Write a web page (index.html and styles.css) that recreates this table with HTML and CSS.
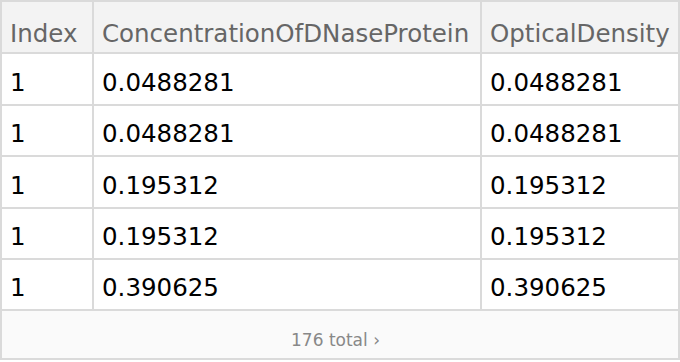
FILE: index.html
```html
<!DOCTYPE html>
<html>
<head>
<meta charset="utf-8">
<link rel="stylesheet" href="styles.css">
</head>
<body>
<div class="grid">
  <div class="cell head">Index</div>
  <div class="cell head">ConcentrationOfDNaseProtein</div>
  <div class="cell head">OpticalDensity</div>

  <div class="cell">1</div>
  <div class="cell">0.0488281</div>
  <div class="cell">0.0488281</div>

  <div class="cell">1</div>
  <div class="cell">0.0488281</div>
  <div class="cell">0.0488281</div>

  <div class="cell">1</div>
  <div class="cell">0.195312</div>
  <div class="cell">0.195312</div>

  <div class="cell">1</div>
  <div class="cell">0.195312</div>
  <div class="cell">0.195312</div>

  <div class="cell">1</div>
  <div class="cell">0.390625</div>
  <div class="cell">0.390625</div>

  <div class="footer">176 total ›</div>
</div>
</body>
</html>
```

FILE: styles.css
```css
html, body {
  margin: 0;
  padding: 0;
  background: #ffffff;
}

.grid {
  width: 680px;
  box-sizing: border-box;
  display: grid;
  grid-template-columns: 92px 388px 198px;
  grid-template-rows: 52px 52px 51px 52px 51px 51px 49px;
  border-top: 2px solid #dadada;
  border-left: 2px solid #dadada;
  font-family: "DejaVu Sans", sans-serif;
  font-size: 24.5px;
  line-height: 28px;
  color: #000000;
}

.cell {
  box-sizing: border-box;
  display: flex;
  align-items: flex-end;
  padding: 0 0 7px 8px;
  border-right: 2px solid #dadada;
  border-bottom: 2px solid #dadada;
  white-space: nowrap;
}

.head {
  background: #f3f3f3;
  color: #666666;
  padding-bottom: 4px;
}

.footer {
  grid-column: 1 / -1;
  box-sizing: border-box;
  display: flex;
  align-items: flex-end;
  justify-content: center;
  padding: 0 9px 8px 0;
  background: #fafafa;
  border-right: 2px solid #dadada;
  border-bottom: 2px solid #dadada;
  font-size: 17px;
  line-height: 20px;
  color: #888888;
}
```
